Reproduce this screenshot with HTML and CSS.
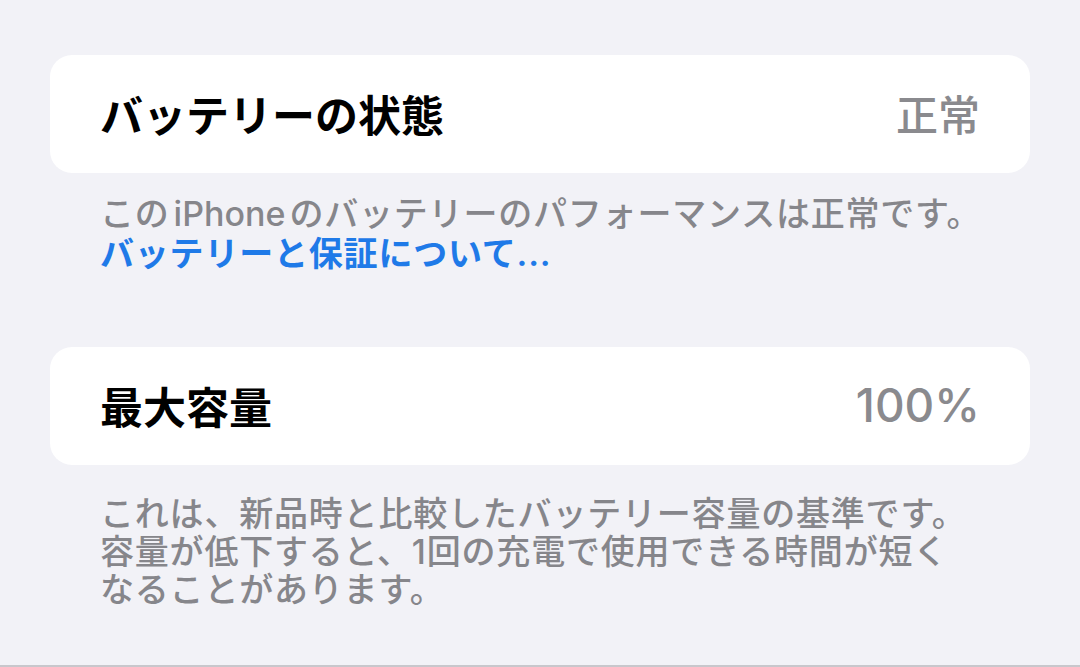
FILE: index.html
```html
<!DOCTYPE html>
<html lang="ja">
<head>
  <meta charset="UTF-8" />
  <title>バッテリーの状態</title>
  <meta name="viewport" content="width=device-width, initial-scale=1.0" />
  <link rel="stylesheet" href="styles.css">
</head>
<body>
  <div class="pagina">
    <section class="grupo">
      <div class="celda">
        <span class="titulo">バッテリーの状態</span>
        <span class="valor">正常</span>
      </div>
      <div class="nota">
        <p>この<span class="latino">iPhone</span>のバッテリーのパフォーマンスは正常です。</p>
        <a href="#" class="enlace">バッテリーと保証について...</a>
      </div>
    </section>

    <section class="grupo segundo">
      <div class="celda">
        <span class="titulo">最大容量</span>
        <span class="valor numero">100%</span>
      </div>
      <div class="nota">
        <p>これは、新品時と比較したバッテリー容量の基準です。<br>容量が低下すると、1回の充電で使用できる時間が短く<br>なることがあります。</p>
      </div>
    </section>
  </div>
</body>
</html>
```

FILE: styles.css
```css
body {
  margin: 0;
  background: #f2f2f7;
  font-family: "Inter", "Noto Sans CJK JP", sans-serif;
  color: #000;
}

.pagina {
  height: 667px;
  box-sizing: border-box;
  padding: 55px 50px 0;
  border-bottom: 2px solid #c8c7cc;
  overflow: hidden;
}

.celda {
  height: 118px;
  background: white;
  border-radius: 22px;
  padding: 0 50px;
  display: flex;
  justify-content: space-between;
  align-items: center;
}

.titulo {
  font-size: 43px;
  font-weight: 700;
  margin-top: -3px;
}

.valor {
  font-size: 42px;
  font-weight: 500;
  color: #8a8a8e;
  margin-top: -3px;
}

.numero {
  font-size: 46px;
}

.nota {
  padding: 0 20px 0 50px;
  margin-top: 22px;
  font-size: 34px;
  letter-spacing: 0.8px;
  line-height: 38px;
  font-weight: 500;
  color: #86868b;
  white-space: nowrap;
}

.nota p {
  margin: 0;
}

.latino {
  padding: 0 4px;
  letter-spacing: 0;
}

.enlace {
  display: block;
  margin-top: 2px;
  color: #1f7ae8;
  font-weight: 600;
  text-decoration: none;
}

.segundo {
  margin-top: 74px;
}

.segundo .nota {
  margin-top: 30px;
}
```
